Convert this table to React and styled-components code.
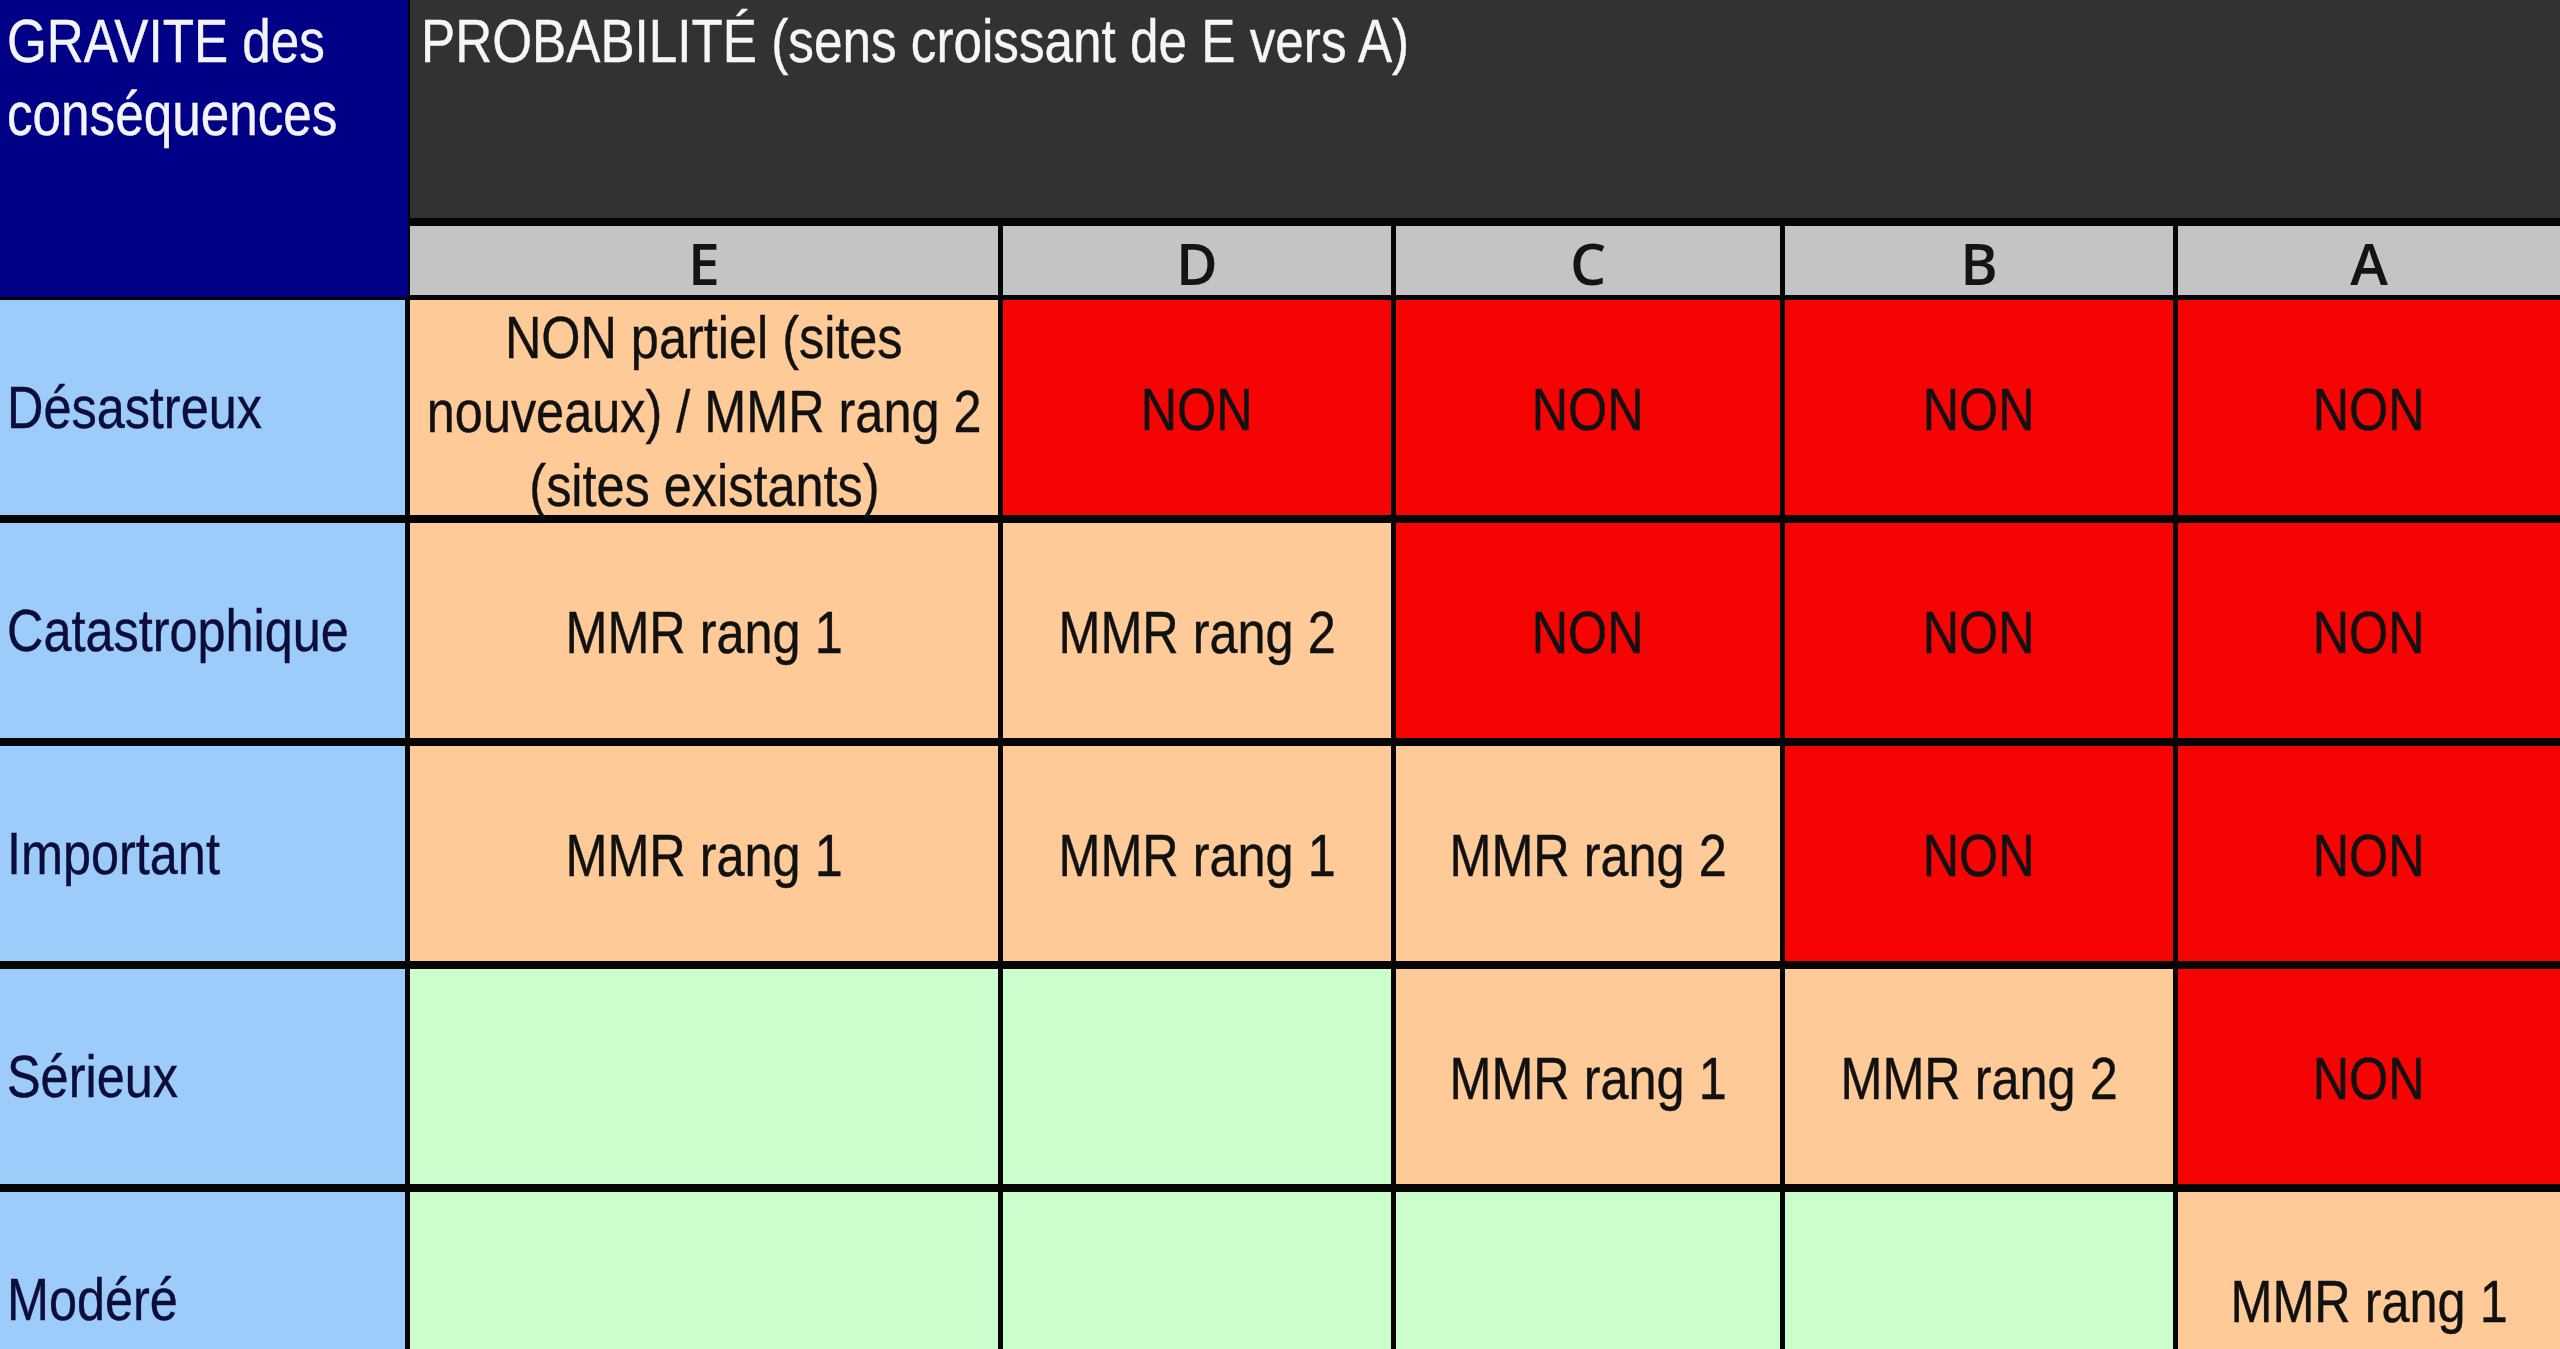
import React from "react";
import styled, { createGlobalStyle } from "styled-components";

const Global = createGlobalStyle`
  html, body { margin: 0; padding: 0; background: #000; overflow: hidden; }
  #root { width: 2560px; }
`;

const SANS = `"Liberation Sans", Arial, sans-serif`;

const Matrix = styled.div`
  display: grid;
  width: 2560px;
  grid-template-columns: 405px 588px 388px 384px 388px 1fr;
  grid-template-rows: 218px 66px repeat(5, 215px);
  column-gap: 5px;
  row-gap: 8px;
  background: #050505;
`;

/* condensed rendering of the narrow typeface used in the original */
const Narrow = styled.span`
  display: inline-block;
  white-space: nowrap;
  transform: scaleX(0.84);
  transform-origin: ${(p) => p.$origin || "center"};
  -webkit-text-stroke: 0.4px currentColor;
`;

const Corner = styled.div`
  grid-row: 1 / span 2;
  grid-column: 1;
  margin-right: -3px;
  margin-bottom: -5px;
  background: #000086;
  color: #f4f4f8;
  font-family: ${SANS};
  font-size: 61px;
  line-height: 73px;
  padding: 5px 0 0 7px;
  display: flex;
  flex-direction: column;
  align-items: flex-start;
`;

const TopHeader = styled.div`
  grid-row: 1;
  grid-column: 2 / -1;
  background: #323232;
  color: #f6f6f6;
  font-family: ${SANS};
  font-size: 61px;
  line-height: 73px;
  padding: 5px 11px;
`;

const Letter = styled.div`
  grid-row: 2;
  margin-bottom: -3px;
  background: #c4c4c4;
  color: #141414;
  font-family: "Open Sans", "DejaVu Sans", sans-serif;
  font-weight: 600;
  font-size: 57px;
  display: flex;
  align-items: center;
  justify-content: center;
  padding-top: 4px;
`;

const RowLabel = styled.div`
  background: #9dcbfa;
  color: #0c0d38;
  font-family: ${SANS};
  font-size: 60px;
  display: flex;
  align-items: center;
  padding-left: 7px;
`;

const COLORS = {
  o: "#fdca98",
  r: "#f60303",
  g: "#ccfdcc",
};

const Cell = styled.div`
  background: ${(p) => COLORS[p.$tone]};
  color: #111;
  font-family: ${SANS};
  font-size: 60px;
  line-height: 74px;
  display: flex;
  align-items: center;
  justify-content: center;
  text-align: center;
  padding-top: 4px;
  overflow: visible;
  white-space: nowrap;
`;

const Lines = styled.div`
  display: flex;
  flex-direction: column;
  align-items: center;
  margin-top: 4px;
`;

const letters = ["E", "D", "C", "B", "A"];

const rows = [
  {
    label: "Désastreux",
    cells: [
      { t: "o", lines: ["NON partiel (sites", "nouveaux) / MMR rang 2", "(sites existants)"] },
      { t: "r", text: "NON" },
      { t: "r", text: "NON" },
      { t: "r", text: "NON" },
      { t: "r", text: "NON" },
    ],
  },
  {
    label: "Catastrophique",
    cells: [
      { t: "o", text: "MMR rang 1" },
      { t: "o", text: "MMR rang 2" },
      { t: "r", text: "NON" },
      { t: "r", text: "NON" },
      { t: "r", text: "NON" },
    ],
  },
  {
    label: "Important",
    cells: [
      { t: "o", text: "MMR rang 1" },
      { t: "o", text: "MMR rang 1" },
      { t: "o", text: "MMR rang 2" },
      { t: "r", text: "NON" },
      { t: "r", text: "NON" },
    ],
  },
  {
    label: "Sérieux",
    cells: [
      { t: "g", text: "" },
      { t: "g", text: "" },
      { t: "o", text: "MMR rang 1" },
      { t: "o", text: "MMR rang 2" },
      { t: "r", text: "NON" },
    ],
  },
  {
    label: "Modéré",
    cells: [
      { t: "g", text: "" },
      { t: "g", text: "" },
      { t: "g", text: "" },
      { t: "g", text: "" },
      { t: "o", text: "MMR rang 1" },
    ],
  },
];

export default function App() {
  return (
    <>
      <Global />
      <Matrix>
        <Corner>
          <Narrow $origin="left">GRAVITE des</Narrow>
          <Narrow $origin="left">conséquences</Narrow>
        </Corner>
        <TopHeader>
          <Narrow $origin="left">PROBABILITÉ (sens croissant de E vers A)</Narrow>
        </TopHeader>
        {letters.map((l) => (
          <Letter key={l}>{l}</Letter>
        ))}
        {rows.map((row) => (
          <React.Fragment key={row.label}>
            <RowLabel>
              <Narrow $origin="left">{row.label}</Narrow>
            </RowLabel>
            {row.cells.map((c, i) => (
              <Cell key={i} $tone={c.t}>
                {c.lines ? (
                  <Lines>
                    {c.lines.map((ln) => (
                      <Narrow key={ln}>{ln}</Narrow>
                    ))}
                  </Lines>
                ) : c.text ? (
                  <Narrow>{c.text}</Narrow>
                ) : null}
              </Cell>
            ))}
          </React.Fragment>
        ))}
      </Matrix>
    </>
  );
}
